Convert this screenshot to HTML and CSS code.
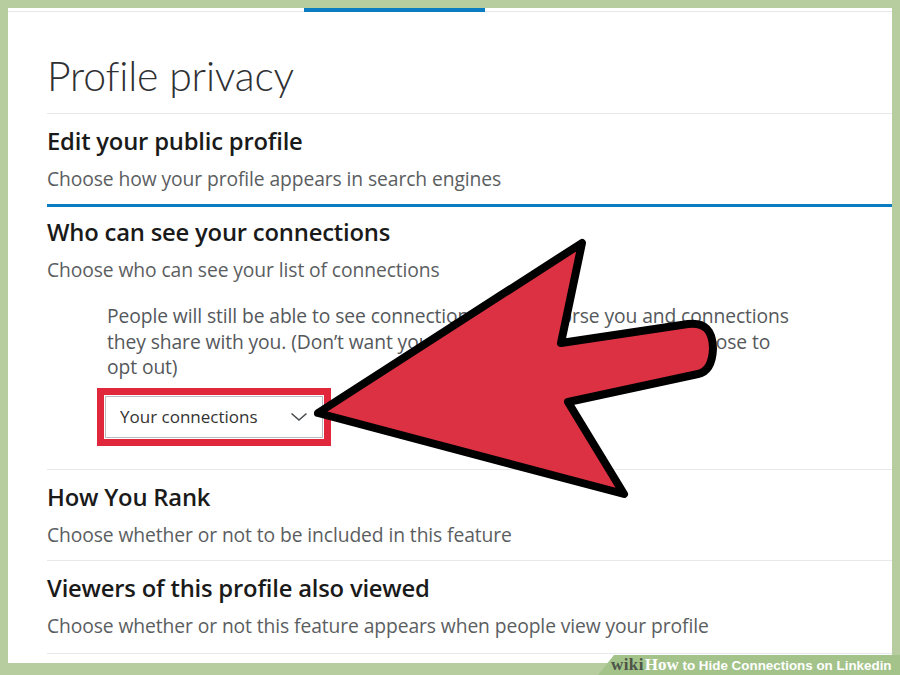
FILE: index.html
```html
<!DOCTYPE html>
<html>
<head>
<meta charset="utf-8">
<link rel="stylesheet" href="styles.css">
</head>
<body>
<div class="frame">
  <div class="panel">
    <div class="tabbar"><span class="tab-active"></span></div>
    <div class="content">
      <h1 class="title">Profile privacy</h1>
      <div class="section first">
        <h2 class="heading">Edit your public profile</h2>
        <p class="desc">Choose how your profile appears in search engines</p>
      </div>
      <div class="section open">
        <h2 class="heading">Who can see your connections</h2>
        <p class="desc">Choose who can see your list of connections</p>
        <p class="note">People will still be able to see connections who endorse you and connections they share with you. (Don’t want your endorsements visible? Just choose to opt out)</p>
        <div class="highlight">
          <div class="select">
            <span class="select-label">Your connections</span>
            <svg class="chevron" width="18" height="10" viewBox="0 0 18 10"><path d="M1.5 1.5 L9 8 L16.5 1.5" fill="none" stroke="#4a4d50" stroke-width="1.6"/></svg>
          </div>
        </div>
      </div>
      <div class="section">
        <h2 class="heading">How You Rank</h2>
        <p class="desc">Choose whether or not to be included in this feature</p>
      </div>
      <div class="section last">
        <h2 class="heading">Viewers of this profile also viewed</h2>
        <p class="desc">Choose whether or not this feature appears when people view your profile</p>
      </div>
    </div>
  </div>
  <svg class="arrow" width="900" height="675" viewBox="0 0 900 675">
    <path d="M318 413 L582 243 L561 343 L688 324 Q713 321 713 349 Q712 371 698 374 L568 402 L624 494 Z" fill="#dc3142" stroke="#000" stroke-width="8" stroke-linejoin="round"/>
  </svg>
  <div class="watermark"><span class="wm-wiki">wiki</span><span class="wm-how">How</span><span class="wm-title"> to Hide Connections on Linkedin</span></div>
</div>
</body>
</html>
```

FILE: styles.css
```css
* { box-sizing: border-box; }
html, body { margin: 0; padding: 0; }
body {
  width: 900px;
  height: 675px;
  overflow: hidden;
  background: #b7cd9f;
  font-family: "Open Sans", "Liberation Sans", sans-serif;
}
.frame {
  position: relative;
  width: 900px;
  height: 675px;
  padding: 8px 8px 12px 8px;
}
.panel {
  background: #fff;
  height: 655px;
  overflow: hidden;
}
.tabbar {
  height: 4px;
  border-top: 2px solid #fff;
  border-bottom: 1px solid #e6e9ec;
  display: flex;
}
.tab-active {
  display: block;
  margin-left: 296px;
  margin-top: -2px;
  width: 181px;
  height: 4px;
  background: #0a7cc1;
}
.content {
  padding-left: 39px;
}
.title {
  margin: 0;
  padding-top: 40px;
  height: 101px;
  font-family: "Lato", "Open Sans", sans-serif;
  font-weight: 300;
  font-size: 41px;
  line-height: 48px;
  color: #2f3033;
  letter-spacing: -0.2px;
}
.section {
  border-top: 1px solid #e6e9ec;
  padding: 12px 0 13px 0;
}
.section.open {
  border-top: 3px solid #0a7cc1;
  padding-top: 10px;
  padding-bottom: 23px;
}
.section.last {
  border-bottom: 1px solid #e6e9ec;
  padding-bottom: 15px;
}
.heading {
  margin: 0;
  font-size: 23.8px;
  line-height: 30px;
  font-weight: 600;
  color: #1a1a1a;
  letter-spacing: -0.2px;
}
.desc {
  margin: 11px 0 0 0;
  font-size: 19.3px;
  line-height: 24px;
  color: #5b5e61;
  letter-spacing: -0.1px;
}
.note {
  margin: 21px 0 0 60px;
  width: 690px;
  font-size: 19.3px;
  line-height: 25.5px;
  color: #55585b;
  letter-spacing: -0.1px;
}
.highlight {
  margin: 8px 0 0 50px;
  display: inline-block;
  border: 7px solid #e0273b;
  padding: 1px;
}
.select {
  width: 218px;
  height: 42px;
  border: 1px solid #b9bcbf;
  background: #fff;
  display: flex;
  align-items: center;
  justify-content: space-between;
  padding: 0 14px 0 14px;
}
.select-label {
  font-size: 17px;
  color: #333;
}
.chevron { display: block; }
.arrow {
  position: absolute;
  left: 0;
  top: 0;
  pointer-events: none;
}
.watermark {
  position: absolute;
  right: 0;
  bottom: 0;
  width: 302px;
  height: 20px;
  background: #a3c38a;
  clip-path: polygon(16px 0, 100% 0, 100% 100%, 0 100%);
  padding-left: 13px;
  white-space: nowrap;
  line-height: 19px;
  font-weight: 700;
}
.wm-wiki {
  font-family: "Liberation Serif", serif;
  color: #4d5349;
  font-size: 17px;
  letter-spacing: 0.4px;
}
.wm-how {
  font-family: "Liberation Serif", serif;
  color: #fff;
  font-size: 17px;
  margin-left: 1px;
}
.wm-title {
  font-family: "Liberation Sans", sans-serif;
  color: #fff;
  font-size: 13.4px;
}
```
